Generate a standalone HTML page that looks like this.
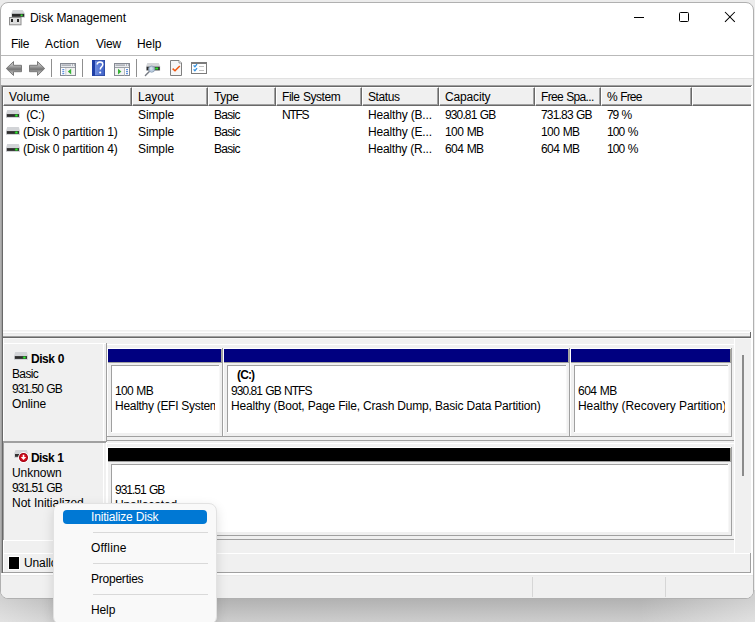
<!DOCTYPE html>
<html>
<head>
<meta charset="utf-8">
<title>Disk Management</title>
<style>
*{box-sizing:border-box;margin:0;padding:0}
html,body{width:755px;height:622px;overflow:hidden}
body{background:#ececec;font-family:"Liberation Sans",sans-serif;font-size:12px;color:#000;position:relative}
.a{position:absolute}
.t{position:absolute;white-space:pre;line-height:14px;height:14px;font-size:12px}
#shadow{left:0;top:590px;width:755px;height:32px;background:linear-gradient(to right,rgba(255,255,255,.42),rgba(255,255,255,0) 90px,rgba(255,255,255,0) 640px,rgba(255,255,255,.4)),linear-gradient(#b2b2b2,#b2b2b2 9px,#cdcdcd)}
#win{left:0;top:2px;width:754px;height:597px;background:#fff;border:1px solid #b0b0b0;border-radius:8px}
#client{left:1px;top:79px;width:752px;height:519px;background:#f0f0f0;border-radius:0 0 7px 7px}
.hb{top:87px;height:19px;background:#f0f0f0;border-top:1px solid #fff;border-left:1px solid #fff;border-right:1px solid #696969;border-bottom:1px solid #696969;box-shadow:inset -1px -1px 0 #a0a0a0}
</style>
</head>
<body>
<svg width="0" height="0" style="position:absolute"><defs>
<linearGradient id="ga" x1="0" y1="0" x2="0" y2="1"><stop offset="0" stop-color="#c6c6c6"/><stop offset="0.3" stop-color="#b0b0b0"/><stop offset="0.55" stop-color="#747474"/><stop offset="0.75" stop-color="#a8a8a8"/><stop offset="1" stop-color="#c0c0c0"/></linearGradient>
<linearGradient id="gh" x1="0" y1="0" x2="1" y2="0"><stop offset="0" stop-color="#6f8ee0"/><stop offset="1" stop-color="#4163c8"/></linearGradient>
<g id="drv"><path d="M1.2 0h11.6l1.2 4v4H0V4z" fill="#d2d4d7"/><rect x="0.8" y="4.1" width="12.2" height="2.8" fill="#2e2e2e"/><ellipse cx="10.4" cy="5.5" rx="1.7" ry="1.5" fill="#1fc81f" fill-opacity=".55"/><rect x="9.4" y="4.8" width="2" height="1.4" fill="#30f030"/></g>
<g id="drvs"><path d="M1.5 0h11l1.5 2.3v4.2H0V2.3z" fill="#cfd1d4"/><rect x="0.3" y="2.6" width="13.4" height="3" fill="#333"/><rect x="9.8" y="3.2" width="2" height="1.6" fill="#2ee62e"/></g>
</defs></svg>
<div class="a" id="shadow"></div>
<div class="a" id="win"></div>
<div class="a" id="client"></div>

<svg class="a" style="left:8px;top:9px" width="18" height="17" viewBox="8 9 18 17">
  <path d="M12.7 10h10l2.3 3.8v4H11.2v-4z" fill="#d5d7da"/>
  <rect x="12" y="13.8" width="12.2" height="3" fill="#2a2a2a"/>
  <rect x="20.6" y="14.5" width="2" height="1.7" fill="#2ee62e"/>
  <rect x="9.5" y="17.5" width="11.5" height="7.3" fill="#dedede" stroke="#8e8e8e"/>
  <rect x="11" y="19" width="2" height="3" fill="#2a2a2a"/>
  <rect x="17" y="19" width="2" height="3" fill="#2a2a2a"/>
</svg>
<div class="t" style="left:30px;top:11px;letter-spacing:-0.05px;">Disk Management</div>
<div class="a" style="left:634px;top:17px;width:10px;height:1px;background:#000;"></div>
<div class="a" style="left:679px;top:12px;width:10px;height:10px;border:1px solid #000;border-radius:1.5px"></div>
<svg class="a" style="left:724px;top:11px" width="12" height="12" viewBox="0 0 12 12"><path d="M1 1L10.8 10.8M10.8 1L1 10.8" stroke="#000" stroke-width="1.05" fill="none"/></svg>
<div class="t" style="left:11px;top:37px;letter-spacing:-0.34px;">File</div>
<div class="t" style="left:45px;top:37px;letter-spacing:0.17px;">Action</div>
<div class="t" style="left:96px;top:37px;letter-spacing:-0.25px;">View</div>
<div class="t" style="left:137px;top:37px;letter-spacing:-0.05px;">Help</div>
<div class="a" style="left:1px;top:55px;width:752px;height:1px;background:#b9b9b9;"></div>
<div class="a" style="left:1px;top:78px;width:752px;height:1px;background:#e1e1e1;"></div>
<svg class="a" style="left:0;top:56px" width="220" height="24" viewBox="0 56 220 24">
 <g stroke="#7a7a7a" stroke-width="1" fill="url(#ga)" stroke-linejoin="round">
  <path d="M6.3 68.5L13.5 61.5V65.3H21.5V71.7H13.5V75.5Z"/>
  <path d="M44.7 68.5L37.5 61.5V65.3H29.5V71.7H37.5V75.5Z"/>
 </g>
 <rect x="51" y="59" width="1" height="18" fill="#8f8f8f"/>
 <rect x="82" y="59" width="1" height="18" fill="#8f8f8f"/>
 <rect x="136" y="59" width="1" height="18" fill="#8f8f8f"/>
 <!-- console left -->
 <g>
  <rect x="60.5" y="63.5" width="15" height="12" fill="#fff" stroke="#858a93"/>
  <rect x="61" y="64" width="14" height="3.5" fill="#e8eaee"/>
  <rect x="61.5" y="64.6" width="9.5" height="1" fill="#8d929b"/>
  <rect x="72" y="64.4" width="1" height="1.2" fill="#8d929b"/><rect x="74" y="64.4" width="1" height="1.2" fill="#8d929b"/>
  <rect x="61" y="67" width="14" height="1" fill="#9da1a8"/>
  <rect x="65.5" y="68" width="1" height="7.5" fill="#b5b8bd"/>
  <rect x="62.3" y="69.2" width="2" height="1" fill="#3b78d8"/><rect x="62.3" y="71.2" width="2" height="1" fill="#3b78d8"/><rect x="62.3" y="73.2" width="2" height="1" fill="#3b78d8"/>
  <rect x="66.5" y="68" width="8.5" height="7" fill="#f3f3f3"/>
  <path d="M71.2 68.8v5.6L67.8 71.6z" fill="#35b335"/>
 </g>
 <!-- help -->
 <g>
  <rect x="92" y="60" width="13" height="16" fill="#2c489f"/>
  <rect x="92" y="60" width="3" height="16" fill="#1f3fa6"/>
  <rect x="95" y="60.7" width="9.2" height="14.5" fill="url(#gh)"/>
  <path d="M97.2 64.6c0-1.7 1.2-2.6 2.8-2.6 1.7 0 2.8 1 2.8 2.5 0 1.3-.7 1.9-1.5 2.6-.7.6-1 1-1 2.3" stroke="#fff" stroke-width="1.5" fill="none"/>
  <circle cx="100.2" cy="72.5" r="1.05" fill="#fff"/>
 </g>
 <!-- console right -->
 <g>
  <rect x="114.5" y="63.5" width="15" height="12" fill="#fff" stroke="#858a93"/>
  <rect x="115" y="64" width="14" height="3.5" fill="#e8eaee"/>
  <rect x="115.5" y="64.6" width="9.5" height="1" fill="#8d929b"/>
  <rect x="126" y="64.4" width="1" height="1.2" fill="#8d929b"/><rect x="128" y="64.4" width="1" height="1.2" fill="#8d929b"/>
  <rect x="115" y="67" width="14" height="1" fill="#9da1a8"/>
  <rect x="124" y="68" width="1" height="7.5" fill="#b5b8bd"/>
  <rect x="115" y="68" width="9" height="7" fill="#f3f3f3"/>
  <rect x="126" y="69.2" width="2" height="1" fill="#3b78d8"/><rect x="126" y="71.2" width="2" height="1" fill="#3b78d8"/><rect x="126" y="73.2" width="2" height="1" fill="#3b78d8"/>
  <path d="M118 68.8v5.6L121.4 71.6z" fill="#35b335"/>
 </g>
 <!-- disk + magnifier -->
 <g>
  <path d="M147.3 63h11.4l1.5 3.6v4.2H146v-4.2z" fill="#d3d5d8"/>
  <rect x="146.6" y="66.7" width="13.2" height="3.6" fill="#2b2b2b"/>
  <rect x="155.2" y="67.5" width="3" height="2" fill="#2ee62e"/>
  <path d="M149.6 71.3L145.4 75.6" stroke="#777c84" stroke-width="1.4" stroke-linecap="round"/>
  <circle cx="151.7" cy="69.1" r="3.1" fill="#bcd0e4" fill-opacity="0.9" stroke="#8a9db3" stroke-width="0.9"/><circle cx="151.2" cy="68.4" r="1.5" fill="#dbe7f3" fill-opacity="0.8"/>
 </g>
 <!-- doc check -->
 <g>
  <path d="M170.5 60.5H179L181.5 63V75.5H170.5Z" fill="#f6f6f6" stroke="#808080"/>
  <path d="M179 60.5V63H181.5" fill="#fff" stroke="#808080" stroke-width="0.8"/>
  <path d="M172.6 68.6L175 70.8L179.8 66" stroke="#f0560e" stroke-width="1.5" fill="none"/>
 </g>
 <!-- checklist -->
 <g>
  <rect x="191.5" y="62.5" width="15" height="11" fill="#fff" stroke="#7c7c7c"/>
  <rect x="191" y="62" width="16" height="2" fill="#7c7c7c"/>
  <path d="M193.6 65.4l1.3 1.4 2.1-2.6" stroke="#3492e0" stroke-width="1.35" fill="none"/>
  <path d="M193.6 69.4l1.3 1.4 2.1-2.6" stroke="#3492e0" stroke-width="1.35" fill="none"/>
  <rect x="199" y="66" width="5" height="1" fill="#c2c2c2"/>
  <rect x="199" y="70" width="5" height="1" fill="#c2c2c2"/>
 </g>
</svg>
<div class="a" style="left:1px;top:85px;width:751px;height:1px;background:#a0a0a0;"></div>
<div class="a" style="left:1px;top:85px;width:1px;height:488px;background:#a0a0a0;"></div>
<div class="a" style="left:2px;top:86px;width:749px;height:1px;background:#696969;"></div>
<div class="a" style="left:2px;top:86px;width:1px;height:487px;background:#696969;"></div>
<div class="a" style="left:751px;top:86px;width:2px;height:487px;background:#fff;"></div>
<div class="a" style="left:752px;top:85px;width:1px;height:1px;background:#fff;"></div>
<div class="a" style="left:3px;top:87px;width:748px;height:243px;background:#fff;"></div>
<div class="a hb" style="left:3px;width:129px"></div>
<div class="t" style="left:9px;top:90px;letter-spacing:0.13px;">Volume</div>
<div class="a hb" style="left:132px;width:76px"></div>
<div class="t" style="left:138px;top:90px;letter-spacing:-0.04px;">Layout</div>
<div class="a hb" style="left:208px;width:68px"></div>
<div class="t" style="left:214px;top:90px;letter-spacing:-0.38px;">Type</div>
<div class="a hb" style="left:276px;width:86px"></div>
<div class="t" style="left:282px;top:90px;letter-spacing:-0.44px;word-spacing:0.44px;">File System</div>
<div class="a hb" style="left:362px;width:77px"></div>
<div class="t" style="left:368px;top:90px;letter-spacing:-0.42px;">Status</div>
<div class="a hb" style="left:439px;width:96px"></div>
<div class="t" style="left:445px;top:90px;letter-spacing:-0.16px;">Capacity</div>
<div class="a hb" style="left:535px;width:66px"></div>
<div class="t" style="left:541px;top:90px;letter-spacing:-0.68px;word-spacing:0.68px;">Free Spa...</div>
<div class="a hb" style="left:601px;width:91px"></div>
<div class="t" style="left:607px;top:90px;letter-spacing:-0.84px;word-spacing:0.84px;">% Free</div>
<div class="a hb" style="left:692px;width:59px;border-right:0;box-shadow:inset 0 -1px 0 #a0a0a0"></div>
<svg class="a" style="left:6px;top:110px" width="14" height="8" viewBox="0 0 14 8"><use href="#drv"/></svg>
<div class="t" style="left:23px;top:108px;letter-spacing:-0.53px;word-spacing:0.53px;">&nbsp;(C:)</div>
<div class="t" style="left:138px;top:108px;letter-spacing:-0.11px;">Simple</div>
<div class="t" style="left:214px;top:108px;letter-spacing:-0.71px;">Basic</div>
<div class="t" style="left:282px;top:108px;letter-spacing:-1.24px;">NTFS</div>
<div class="t" style="left:368px;top:108px;letter-spacing:-0.17px;">Healthy (B...</div>
<div class="t" style="left:445px;top:108px;letter-spacing:-0.88px;word-spacing:0.88px;">930.81 GB</div>
<div class="t" style="left:541px;top:108px;letter-spacing:-0.83px;word-spacing:0.83px;">731.83 GB</div>
<div class="t" style="left:607px;top:108px;letter-spacing:-1.05px;word-spacing:1.05px;">79 %</div>
<svg class="a" style="left:6px;top:127px" width="14" height="8" viewBox="0 0 14 8"><use href="#drv"/></svg>
<div class="t" style="left:23px;top:125px;letter-spacing:-0.14px;">(Disk 0 partition 1)</div>
<div class="t" style="left:138px;top:125px;letter-spacing:-0.11px;">Simple</div>
<div class="t" style="left:214px;top:125px;letter-spacing:-0.71px;">Basic</div>
<div class="t" style="left:368px;top:125px;letter-spacing:-0.17px;">Healthy (E...</div>
<div class="t" style="left:445px;top:125px;letter-spacing:-0.57px;word-spacing:0.57px;">100 MB</div>
<div class="t" style="left:541px;top:125px;letter-spacing:-0.57px;word-spacing:0.57px;">100 MB</div>
<div class="t" style="left:607px;top:125px;letter-spacing:-0.88px;word-spacing:0.88px;">100 %</div>
<svg class="a" style="left:6px;top:144px" width="14" height="8" viewBox="0 0 14 8"><use href="#drv"/></svg>
<div class="t" style="left:23px;top:142px;letter-spacing:-0.14px;">(Disk 0 partition 4)</div>
<div class="t" style="left:138px;top:142px;letter-spacing:-0.11px;">Simple</div>
<div class="t" style="left:214px;top:142px;letter-spacing:-0.71px;">Basic</div>
<div class="t" style="left:368px;top:142px;letter-spacing:-0.22px;">Healthy (R...</div>
<div class="t" style="left:445px;top:142px;letter-spacing:-0.57px;word-spacing:0.57px;">604 MB</div>
<div class="t" style="left:541px;top:142px;letter-spacing:-0.57px;word-spacing:0.57px;">604 MB</div>
<div class="t" style="left:607px;top:142px;letter-spacing:-0.88px;word-spacing:0.88px;">100 %</div>
<div class="a" style="left:3px;top:330px;width:748px;height:1px;background:#f0f0f0;"></div>
<div class="a" style="left:3px;top:331px;width:748px;height:1px;background:#f6f6f6;"></div>
<div class="a" style="left:3px;top:332px;width:748px;height:1px;background:#fff;"></div>
<div class="a" style="left:3px;top:333px;width:748px;height:1px;background:#e9e9e9;"></div>
<div class="a" style="left:3px;top:334px;width:748px;height:2px;background:#f0f0f0;"></div>
<div class="a" style="left:3px;top:336px;width:747px;height:1px;background:#a0a0a0;"></div>
<div class="a" style="left:3px;top:337px;width:747px;height:1px;background:#696969;"></div>
<div class="a" style="left:750px;top:332px;width:1px;height:6px;background:#696969;"></div>
<div class="a" style="left:3px;top:338px;width:748px;height:1px;background:#f8f8f8;"></div>
<div class="a" style="left:3px;top:338px;width:1px;height:235px;background:#fff;"></div>
<div class="a" style="left:3px;top:343px;width:103px;height:1px;background:#fff;"></div>
<div class="a" style="left:103px;top:343px;width:1px;height:98px;background:#fff;"></div>
<div class="a" style="left:106px;top:343px;width:1px;height:99px;background:#a0a0a0;"></div>
<div class="a" style="left:3px;top:441px;width:103px;height:1px;background:#a0a0a0;"></div>
<div class="a" style="left:107px;top:344px;width:627px;height:1px;background:#fff;"></div>
<div class="a" style="left:107px;top:436px;width:625px;height:1px;background:#a0a0a0;"></div>
<div class="a" style="left:107px;top:440px;width:627px;height:1px;background:#a0a0a0;"></div>
<div class="a" style="left:3px;top:442px;width:103px;height:1px;background:#a0a0a0;"></div>
<div class="a" style="left:3px;top:442px;width:1px;height:98px;background:#a0a0a0;"></div>
<div class="a" style="left:103px;top:443px;width:1px;height:97px;background:#fff;"></div>
<div class="a" style="left:106px;top:442px;width:1px;height:98px;background:#fff;"></div>
<div class="a" style="left:107px;top:443px;width:627px;height:1px;background:#fff;"></div>
<div class="a" style="left:107px;top:535px;width:625px;height:1px;background:#a0a0a0;"></div>
<div class="a" style="left:107px;top:539px;width:627px;height:1px;background:#a0a0a0;"></div>
<div class="a" style="left:734px;top:338px;width:1px;height:215px;background:#fff;"></div>
<div class="a" style="left:3px;top:540px;width:104px;height:1px;background:#fff;"></div>
<div class="a" style="left:107px;top:348px;width:115px;height:1px;background:#fff;"></div>
<div class="a" style="left:107px;top:348px;width:1px;height:88px;background:#fff;"></div>
<div class="a" style="left:108px;top:349px;width:113px;height:13px;background:#000080;"></div>
<div class="a" style="left:221px;top:349px;width:1px;height:13px;background:#a7a7a0;"></div>
<div class="a" style="left:222px;top:348px;width:1px;height:89px;background:#a0a0a0;"></div>
<div class="a" style="left:108px;top:362px;width:114px;height:1px;background:#a0a0a0;"></div>
<div class="a" style="left:111px;top:365px;width:108px;height:68px;background:#fff;border-top:1px solid #a0a0a0;border-left:1px solid #a0a0a0;"></div>
<div class="a" style="left:111px;top:432px;width:1px;height:1px;background:#fff;"></div>
<div class="a" style="left:219px;top:365px;width:1px;height:68px;background:#f7f7f7;"></div>
<div class="a" style="left:223px;top:348px;width:346px;height:1px;background:#fff;"></div>
<div class="a" style="left:223px;top:348px;width:1px;height:88px;background:#fff;"></div>
<div class="a" style="left:224px;top:349px;width:344px;height:13px;background:#000080;"></div>
<div class="a" style="left:568px;top:349px;width:1px;height:13px;background:#a7a7a0;"></div>
<div class="a" style="left:569px;top:348px;width:1px;height:89px;background:#a0a0a0;"></div>
<div class="a" style="left:224px;top:362px;width:345px;height:1px;background:#a0a0a0;"></div>
<div class="a" style="left:227px;top:365px;width:339px;height:68px;background:#fff;border-top:1px solid #a0a0a0;border-left:1px solid #a0a0a0;"></div>
<div class="a" style="left:227px;top:432px;width:1px;height:1px;background:#fff;"></div>
<div class="a" style="left:566px;top:365px;width:1px;height:68px;background:#f7f7f7;"></div>
<div class="a" style="left:570px;top:348px;width:161px;height:1px;background:#fff;"></div>
<div class="a" style="left:570px;top:348px;width:1px;height:88px;background:#fff;"></div>
<div class="a" style="left:571px;top:349px;width:159px;height:13px;background:#000080;"></div>
<div class="a" style="left:730px;top:349px;width:1px;height:13px;background:#a7a7a0;"></div>
<div class="a" style="left:731px;top:348px;width:1px;height:89px;background:#a0a0a0;"></div>
<div class="a" style="left:571px;top:362px;width:160px;height:1px;background:#a0a0a0;"></div>
<div class="a" style="left:574px;top:365px;width:154px;height:68px;background:#fff;border-top:1px solid #a0a0a0;border-left:1px solid #a0a0a0;"></div>
<div class="a" style="left:574px;top:432px;width:1px;height:1px;background:#fff;"></div>
<div class="a" style="left:728px;top:365px;width:1px;height:68px;background:#f7f7f7;"></div>
<div class="a" style="left:107px;top:447px;width:624px;height:1px;background:#fff;"></div>
<div class="a" style="left:107px;top:447px;width:1px;height:88px;background:#fff;"></div>
<div class="a" style="left:108px;top:448px;width:622px;height:13px;background:#000000;"></div>
<div class="a" style="left:730px;top:448px;width:1px;height:13px;background:#a7a7a0;"></div>
<div class="a" style="left:731px;top:447px;width:1px;height:89px;background:#a0a0a0;"></div>
<div class="a" style="left:108px;top:461px;width:623px;height:1px;background:#a0a0a0;"></div>
<div class="a" style="left:111px;top:464px;width:617px;height:68px;background:#fff;border-top:1px solid #a0a0a0;border-left:1px solid #a0a0a0;"></div>
<div class="a" style="left:111px;top:531px;width:1px;height:1px;background:#fff;"></div>
<div class="a" style="left:728px;top:464px;width:1px;height:68px;background:#f7f7f7;"></div>
<svg class="a" style="left:14px;top:352px" width="14" height="8" viewBox="0 0 14 8"><use href="#drv"/></svg>
<div class="t" style="left:31px;top:352px;letter-spacing:-0.51px;word-spacing:0.51px;font-weight:bold;">Disk 0</div>
<div class="t" style="left:12px;top:367px;letter-spacing:-0.65px;">Basic</div>
<div class="t" style="left:12px;top:382px;letter-spacing:-0.96px;word-spacing:0.96px;">931.50 GB</div>
<div class="t" style="left:12px;top:397px;letter-spacing:-0.11px;">Online</div>
<div class="t" style="left:115px;top:384px;letter-spacing:-0.67px;word-spacing:0.67px;">100 MB</div>
<div class="t" style="left:115px;top:399px;letter-spacing:-0.29px;width:100px;overflow:hidden;">Healthy (EFI System Partition)</div>
<div class="t" style="left:237px;top:368px;letter-spacing:-0.86px;font-weight:bold;">(C:)</div>
<div class="t" style="left:231px;top:384px;letter-spacing:-0.96px;word-spacing:0.96px;">930.81 GB NTFS</div>
<div class="t" style="left:231px;top:399px;letter-spacing:-0.18px;">Healthy (Boot, Page File, Crash Dump, Basic Data Partition)</div>
<div class="t" style="left:578px;top:384px;letter-spacing:-0.53px;word-spacing:0.53px;">604 MB</div>
<div class="t" style="left:578px;top:399px;letter-spacing:-0.06px;width:146.5px;overflow:hidden;">Healthy (Recovery Partition)</div>
<svg class="a" style="left:13px;top:449px" width="17" height="15" viewBox="13 449 17 15"><path d="M15.5 450h11.3l1.2 3.5v4.5H14.2v-4.5z" fill="#d2d4d7"/><rect x="15" y="454" width="12" height="2.8" fill="#333"/><circle cx="23.5" cy="457.5" r="5.4" fill="#fff"/><circle cx="23.5" cy="457.5" r="3.9" fill="#d8101e" stroke="#a40012" stroke-width="1.2"/><path d="M22.7 454.7h1.6v2.3h1.9l-2.7 3.1-2.7-3.1h1.9z" fill="#fff"/></svg>
<div class="t" style="left:31px;top:451px;letter-spacing:-0.59px;word-spacing:0.59px;font-weight:bold;">Disk 1</div>
<div class="t" style="left:12px;top:466px;letter-spacing:-0.05px;">Unknown</div>
<div class="t" style="left:12px;top:481px;letter-spacing:-0.96px;word-spacing:0.96px;">931.51 GB</div>
<div class="t" style="left:12px;top:496px;letter-spacing:-0.02px;">Not Initialized</div>
<div class="t" style="left:115px;top:483px;letter-spacing:-1.00px;word-spacing:1.00px;">931.51 GB</div>
<div class="t" style="left:115px;top:498px;letter-spacing:-0.12px;">Unallocated</div>
<div class="a" style="left:742px;top:355px;width:2px;height:121px;background:#8b8b8b;"></div>
<div class="a" style="left:3px;top:553px;width:748px;height:1px;background:#fff;"></div>
<div class="a" style="left:8px;top:556px;width:12px;height:14px;background:#fff;"></div>
<div class="a" style="left:9px;top:557px;width:10px;height:12px;background:#000;"></div>
<div class="t" style="left:24px;top:556px;letter-spacing:-0.12px;">Unallocated</div>
<div class="a" style="left:3px;top:572px;width:748px;height:1px;background:#a0a0a0;"></div>
<div class="a" style="left:750px;top:553px;width:1px;height:20px;background:#a0a0a0;"></div>
<div class="a" style="left:1px;top:573px;width:752px;height:2px;background:#fff;"></div>
<div class="a" style="left:1px;top:575px;width:752px;height:1px;background:#e9e9e9;"></div>
<div class="a" style="left:532px;top:577px;width:1px;height:20px;background:#d6d6d6;"></div>
<div class="a" style="left:665px;top:577px;width:1px;height:20px;background:#d6d6d6;"></div>
<div class="a" style="left:53px;top:503px;width:164px;height:122px;background:#f9f9f9;border:1px solid #e2e2e2;border-radius:8px;box-shadow:0 4px 12px rgba(0,0,0,0.13)"></div>
<div class="a" style="left:63px;top:510px;width:144px;height:14px;background:#0078d4;border-radius:4px"></div>
<div class="t" style="left:91px;top:510px;letter-spacing:-0.18px;color:#fff;">Initialize Disk</div>
<div class="a" style="left:93px;top:532px;width:115px;height:1px;background:#d9d9d9;"></div>
<div class="a" style="left:93px;top:563px;width:115px;height:1px;background:#d9d9d9;"></div>
<div class="a" style="left:93px;top:594px;width:115px;height:1px;background:#d9d9d9;"></div>
<div class="t" style="left:91px;top:541px;letter-spacing:0.18px;">Offline</div>
<div class="t" style="left:91px;top:572px;letter-spacing:-0.23px;">Properties</div>
<div class="t" style="left:91px;top:603px;letter-spacing:-0.12px;">Help</div>
</body>
</html>
